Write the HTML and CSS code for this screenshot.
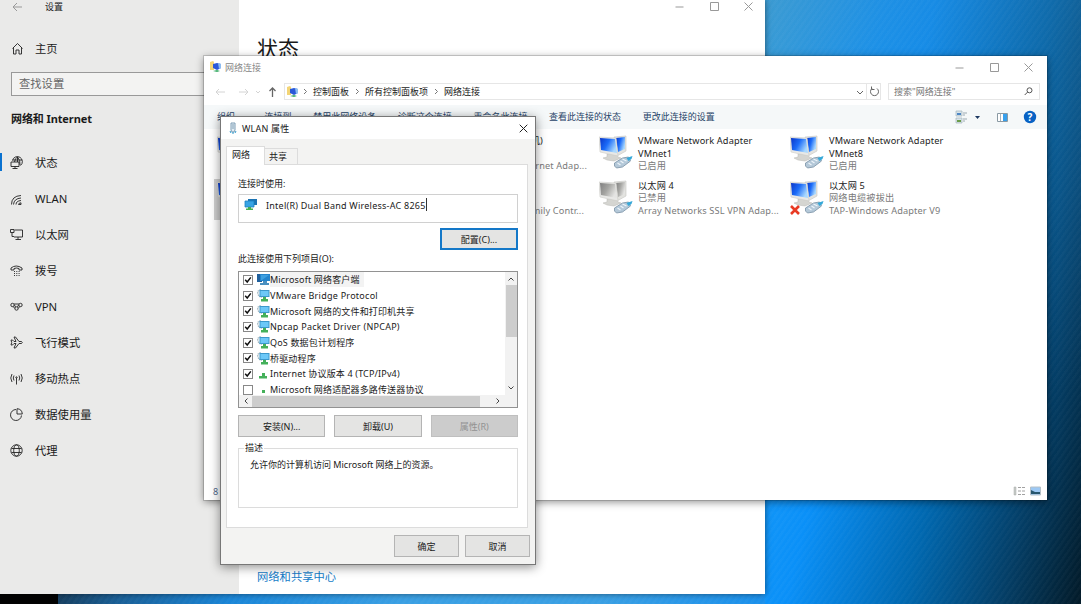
FILE: index.html
```html
<!DOCTYPE html>
<html lang="zh-CN">
<head>
    <meta charset="UTF-8">
    <meta name="viewport" content="width=device-width, initial-scale=1.0">
    <title>网络连接</title>
    <link rel="stylesheet" href="styles.css">
</head>
<body>

    <!-- Shared icons -->
    <svg class="defs" width="0" height="0">
        <defs>
            <linearGradient id="screen" x1="0" y1="0" x2="1" y2="0.5">
                <stop offset="0" stop-color="#0a35c8"/>
                <stop offset="0.5" stop-color="#1c6cf8"/>
                <stop offset="1" stop-color="#a8d8ff"/>
            </linearGradient>
            <linearGradient id="screen-off" x1="0" y1="0" x2="1" y2="0.5">
                <stop offset="0" stop-color="#808080"/>
                <stop offset="0.5" stop-color="#a5a5a2"/>
                <stop offset="1" stop-color="#e4e4e2"/>
            </linearGradient>
            <symbol id="plug" viewBox="0 0 20 14">
                <path d="M1 8l8-5 6-1 2 4-8 6-6 1-2-2z" fill="#b4c8d8" stroke="#7890a4" stroke-width=".8"/>
                <path d="M4 8l3 2M7 6l3 2M9 4l4 2" stroke="#edf5fa" stroke-width="1.2"/>
                <path d="M13 3l6-2-1 3-3 2z" fill="#35a8d8"/>
            </symbol>
            <symbol id="adapter" viewBox="0 0 35 35">
                <path d="M15 2l12-1v15l-9 5z" fill="#e3e3df" stroke="#c6c6c2" stroke-width=".6"/>
                <path d="M17 3l9-1v12l-7 3z" fill="url(#screen)"/>
                <path d="M8 19l10 1 1 2 3 1-7 3-7-1-4-2 4-1z" fill="#d5d5d1" stroke="#b8b8b4" stroke-width=".5"/>
                <path d="M0 2l17 1 2 18-18-4z" fill="#e8e8e6" stroke="#ccccc8" stroke-width=".6"/>
                <path d="M1 3l15 1 2 14-16-3z" fill="url(#screen)"/>
                <use href="#plug" x="14" y="20" width="21" height="14"/>
            </symbol>
            <symbol id="adapter-off" viewBox="0 0 35 35">
                <path d="M15 2l12-1v15l-9 5z" fill="#e3e3df" stroke="#c6c6c2" stroke-width=".6"/>
                <path d="M17 3l9-1v12l-7 3z" fill="url(#screen-off)"/>
                <path d="M8 19l10 1 1 2 3 1-7 3-7-1-4-2 4-1z" fill="#d5d5d1" stroke="#b8b8b4" stroke-width=".5"/>
                <path d="M0 2l17 1 2 18-18-4z" fill="#e8e8e6" stroke="#ccccc8" stroke-width=".6"/>
                <path d="M1 3l15 1 2 14-16-3z" fill="url(#screen-off)"/>
                <use href="#plug" x="14" y="20" width="21" height="14"/>
            </symbol>
            <symbol id="folder" viewBox="0 0 12 12">
                <path d="M0 1l3-1 1 1v8H0z" fill="#f3d576"/>
                <path d="M3 3l4-1 4 1v4l-4 2-4-2z" fill="#2a58d8"/>
                <path d="M8 2l3 1v4l-2 1z" fill="#8cbcf0"/>
                <path d="M3 10l4-1 3 1-3 1z" fill="#3fae6a"/>
            </symbol>
            <symbol id="client" viewBox="0 0 13 13">
                <path d="M0 1h3v3h2v5H0z" fill="#1f5f9c"/>
                <path d="M3 1h10v7H3z" fill="#2484cc"/>
                <path d="M4 2h8L5 7H4z" fill="#3ea0e0"/>
                <path d="M6 8h4v2h2v2H3v-2h3z" fill="#4a90c0"/>
            </symbol>
            <symbol id="service" viewBox="0 0 13 13">
                <path d="M4 1Q0 1 1 5q1 3 4 3" fill="none" stroke="#9db4c0" stroke-width="1.4" stroke-dasharray="1.5 .6"/>
                <path d="M2.500 1h10v7h-10z" fill="#3c98cc"/>
                <path d="M3.500 2h8v5h-8z" fill="#6cc8f8"/>
                <path d="M6 8h3v2h2v2.500H4V10h2z" fill="#44b05a"/>
            </symbol>
            <symbol id="protocol" viewBox="0 0 13 13">
                <path d="M5 6h3v3h2v2.500H2V9h3z" fill="#44b05a"/>
            </symbol>
            <symbol id="check" viewBox="0 0 8 8">
                <path d="M1.200 3.800l2 2.200 3.600-4.600" fill="none" stroke="#111" stroke-width="1.500"/>
            </symbol>
        </defs>
    </svg>

    <div class="desktop">
        <div class="stripes"></div>
        <div class="taskbar"></div>

        <!-- Settings -->
        <div class="window settings">
            <div class="sidebar">
                <div class="settings-title">
                    <svg class="back" viewBox="0 0 10 10"><path d="M10 5H1M5 1L1 5l4 4"/></svg>
                    <span>设置</span>
                </div>
                <div class="nav-item home">
                    <svg viewBox="0 0 13 13"><path d="M1.500 6.500l5-5 5 5M2.500 5.500V12H5V8h3v4h2.500V5.500"/></svg>
                    <span>主页</span>
                </div>
                <div class="find-box">查找设置</div>
                <div class="nav-heading">网络和 Internet</div>
                <div class="nav-item active">
                    <svg viewBox="0 0 13 13"><path d="M2.500 4.500A5 5 0 1 1 10.500 9.500M2.500 4h9.500M7.500 1v5M7.500 1Q5 2 4.500 6M7.500 1q3 3 2.500 8M1 6h8v4.500H1zM5 10.500v2M2.500 12.500h5"/></svg>
                    <span>状态</span>
                </div>
                <div class="nav-item">
                    <svg viewBox="0 0 13 13"><path d="M1.500 12.500Q1.500 4 11 3.500M3.500 12.500Q4 6.500 11 6M6 12.500q0-3.500 5-4M8.500 12.500q0-1.500 2.500-1.700v1.700z"/></svg>
                    <span>WLAN</span>
                </div>
                <div class="nav-item">
                    <svg viewBox="0 0 13 13"><path d="M4.500 2h8v7H4M8 9v2.500M5.500 11.500H11M.5 1.500h3.500v3H.5zM2 4.500v4h2"/></svg>
                    <span>以太网</span>
                </div>
                <div class="nav-item">
                    <svg viewBox="0 0 13 13"><path d="M1 6V4q5-4 11 0v2H9V4.500Q6.500 3.500 4 4.500V6z"/><path d="M4 7.500h6M4 9.500h6M4 11.500h6" stroke-dasharray="1 1.300"/></svg>
                    <span>拨号</span>
                </div>
                <div class="nav-item">
                    <svg viewBox="0 0 13 13"><circle cx="2.500" cy="5" r="1.700"/><circle cx="10.500" cy="5" r="1.700"/><circle cx="6.500" cy="8.500" r="1.700"/><path d="M4 5.500l2 1M9 5.500l-2 1M4 4h5M3 6.500l2 2M10 6.500l-2 2"/></svg>
                    <span>VPN</span>
                </div>
                <div class="nav-item">
                    <svg viewBox="0 0 13 13"><path d="M1 4h1.500L4 5.500h2L4 1h1.500L9 5.500h2.500q1.500 1 0 2H9L5.500 12H4l2-4.500H4L2.500 9H1l.7-2.500z"/></svg>
                    <span>飞行模式</span>
                </div>
                <div class="nav-item">
                    <svg viewBox="0 0 13 13"><path d="M2 2q-2.500 4 0 8M11 2q2.500 4 0 8M4 3.500Q2.500 6 4 8.500M9 3.500q1.500 2.500 0 5M6.500 6v6.500"/><circle cx="6.500" cy="5.500" r=".7"/></svg>
                    <span>移动热点</span>
                </div>
                <div class="nav-item">
                    <svg viewBox="0 0 13 13"><path d="M6 1.500a5.500 5.500 0 1 0 5.500 6M7 .7V6h5.300Q12 1 7 .7z"/></svg>
                    <span>数据使用量</span>
                </div>
                <div class="nav-item">
                    <svg viewBox="0 0 13 13"><circle cx="6.500" cy="6.500" r="5.700"/><ellipse cx="6.500" cy="6.500" rx="2.800" ry="5.700"/><path d="M1.500 4.500h10M1.500 8.500h10"/></svg>
                    <span>代理</span>
                </div>
            </div>
            <div class="settings-main">
                <div class="controls">
                    <svg viewBox="0 0 9 9"><path d="M.5 5h8"/></svg>
                    <svg viewBox="0 0 9 9"><path d="M.5.5h8v8h-8z"/></svg>
                    <svg viewBox="0 0 9 9"><path d="M.5.5l8 8M8.500.5l-8 8"/></svg>
                </div>
                <h1>状态</h1>
                <a class="sharing-link">网络和共享中心</a>
            </div>
        </div>

        <!-- Network connections -->
        <div class="window explorer">
            <div class="explorer-title">
                <svg class="folder-icon"><use href="#folder"/></svg>
                <span>网络连接</span>
                <div class="controls">
                    <svg viewBox="0 0 9 9"><path d="M.5 5h8"/></svg>
                    <svg viewBox="0 0 9 9"><path d="M.5.5h8v8h-8z"/></svg>
                    <svg viewBox="0 0 9 9"><path d="M.5.5l8 8M8.500.5l-8 8"/></svg>
                </div>
            </div>
            <div class="address-row">
                <svg class="nav-arrows" viewBox="0 0 66 12">
                    <path class="dim" d="M10 6H1M4 3L1 6l3 3M24 6h9M30 3l3 3-3 3M41 5l2 2 2-2"/>
                    <path class="up" d="M57.500 11V2M54.500 5l3-3 3 3"/>
                </svg>
                <div class="address">
                    <svg class="folder-icon"><use href="#folder"/></svg>
                    <svg class="chevron" viewBox="0 0 5 7"><path d="M1 1l2.500 2.500L1 6"/></svg>
                    <span>控制面板</span>
                    <svg class="chevron" viewBox="0 0 5 7"><path d="M1 1l2.500 2.500L1 6"/></svg>
                    <span>所有控制面板项</span>
                    <svg class="chevron" viewBox="0 0 5 7"><path d="M1 1l2.500 2.500L1 6"/></svg>
                    <span>网络连接</span>
                    <svg class="address-end" viewBox="0 0 26 16"><path d="M3 7l3 3 3-3"/><path class="divider" d="M12.500 0v16"/><path d="M18 4.500a4 4 0 1 0 5 0M17.500 2.500v3h3"/></svg>
                </div>
                <div class="search">
                    <span>搜索"网络连接"</span>
                    <svg viewBox="0 0 9 9"><circle cx="5.500" cy="3.300" r="2.500"/><path d="M3.700 5L.7 8"/></svg>
                </div>
            </div>
            <div class="commands">
                <span class="organize">组织 <i></i></span>
                <span>连接到</span>
                <span>禁用此网络设备</span>
                <span>诊断这个连接</span>
                <span>重命名此连接</span>
                <span>查看此连接的状态</span>
                <span>更改此连接的设置</span>
                <svg class="view-icons" viewBox="0 0 82 14">
                    <path d="M1 1h6v5H1zM1 8h6v5H1z" fill="#d8e4ea" stroke="#a5b4bc" stroke-width=".7"/>
                    <path d="M2 3h4v2H2z" fill="#4e86c4"/><path d="M2 10h4v2H2z" fill="#6a9c48"/>
                    <path d="M8 3h4M8 5h2M8 9h4M8 11h2" stroke="#9caab2"/>
                    <path d="M20 6h5l-2.500 3z" fill="#1c3860"/>
                    <path d="M42.500 3.500h10v8h-10z" fill="#fff" stroke="#8a9aa4"/>
                    <path d="M48 4h4v7h-4z" fill="#38a0ec"/><path d="M45.500 4v7" stroke="#a6b2ba"/>
                    <circle cx="75" cy="7" r="6.200" fill="#0862c4"/>
                    <text x="75" y="10.600" text-anchor="middle">?</text>
                </svg>
            </div>
            <div class="connections">
                <div class="connection first">
                    <svg class="adapter"><use href="#adapter"/></svg>
                </div>
                <div class="connection clipped">
                    <div class="lines">
                        <div class="name machine">以太网 (虚拟机)</div>
                        <div>&nbsp;</div>
                        <div>Virtual Ethernet Adap...</div>
                    </div>
                </div>
                <div class="connection">
                    <svg class="adapter"><use href="#adapter"/></svg>
                    <div class="lines">
                        <div class="name">VMware Network Adapter</div>
                        <div class="name">VMnet1</div>
                        <div>已启用</div>
                    </div>
                </div>
                <div class="connection">
                    <svg class="adapter"><use href="#adapter"/></svg>
                    <div class="lines">
                        <div class="name">VMware Network Adapter</div>
                        <div class="name">VMnet8</div>
                        <div>已启用</div>
                    </div>
                </div>
                <div class="connection first selected">
                    <svg class="adapter"><use href="#adapter"/></svg>
                </div>
                <div class="connection clipped second">
                    <div class="lines">
                        <div>&nbsp;</div>
                        <div>&nbsp;</div>
                        <div>GbE Family Contr...</div>
                    </div>
                </div>
                <div class="connection">
                    <svg class="adapter"><use href="#adapter-off"/></svg>
                    <div class="lines">
                        <div class="name">以太网 4</div>
                        <div>已禁用</div>
                        <div>Array Networks SSL VPN Adap...</div>
                    </div>
                </div>
                <div class="connection">
                    <svg class="adapter"><use href="#adapter"/><path d="M1 26l8 8M9 26l-8 8" stroke="#e83a24" stroke-width="2.600"/></svg>
                    <div class="lines">
                        <div class="name">以太网 5</div>
                        <div>网络电缆被拔出</div>
                        <div>TAP-Windows Adapter V9</div>
                    </div>
                </div>
            </div>
            <div class="status-bar">
                <span>8</span>
                <svg viewBox="0 0 28 10">
                    <path d="M1 1h2v8H1z" fill="#c6ccc8" stroke="#aaa" stroke-width=".5"/>
                    <path d="M5 1.500h3M9 1.500h3M5 5h3M9 5h3M5 8.500h3M9 8.500h3" stroke="#8a8a8a" stroke-width=".8"/>
                    <path d="M17.500 1h10v8h-10z" fill="#9cc8f4" stroke="#b4c0c8"/>
                    <path d="M18 4l4 2h5v2h-9z" fill="#28566e"/>
                </svg>
            </div>
        </div>

        <!-- WLAN properties -->
        <div class="window dialog">
            <div class="dialog-title">
                <svg class="adapter-small" viewBox="0 0 8 12"><path d="M2 1h4v7L5 10H3L2 8z" fill="#e4eef4" stroke="#7c9cb4"/><path d="M4 2v5" stroke="#7c9cb4"/><path d="M1 9l1 2M4 10v2M7 9l-1 2" stroke="#2c98cc"/></svg>
                <span>WLAN 属性</span>
                <svg class="close" viewBox="0 0 9 9"><path d="M.7.7l7.600 7.600M8.300.7L.7 8.300"/></svg>
            </div>
            <div class="tabs">
                <div class="tab current">网络</div>
                <div class="tab">共享</div>
            </div>
            <div class="panel">
                <div class="label">连接时使用:</div>
                <div class="device-box">
                    <svg viewBox="0 0 13 13"><path d="M4 1h9v6H4z" fill="#1c74b4"/><path d="M1 3h9v6H1z" fill="#38a4e4" stroke="#1c80c0" stroke-width=".8"/><path d="M4 9h3v1.500h2V12H2v-1.500h2z" fill="#44b050"/></svg>
                    <span>Intel(R) Dual Band Wireless-AC 8265</span>
                </div>
                <button class="configure">配置(C)...</button>
                <div class="label">此连接使用下列项目(O):</div>
                <div class="list-box">
                    <div class="list-body">
                        <ul>
                            <li class="marked"><b><svg><use href="#check"/></svg></b><svg class="kind"><use href="#client"/></svg><span>Microsoft 网络客户端</span></li>
                            <li><b><svg><use href="#check"/></svg></b><svg class="kind"><use href="#service"/></svg><span class="latin">VMware Bridge Protocol</span></li>
                            <li><b><svg><use href="#check"/></svg></b><svg class="kind"><use href="#service"/></svg><span>Microsoft 网络的文件和打印机共享</span></li>
                            <li><b><svg><use href="#check"/></svg></b><svg class="kind"><use href="#service"/></svg><span class="latin">Npcap Packet Driver (NPCAP)</span></li>
                            <li><b><svg><use href="#check"/></svg></b><svg class="kind"><use href="#service"/></svg><span>QoS 数据包计划程序</span></li>
                            <li><b><svg><use href="#check"/></svg></b><svg class="kind"><use href="#service"/></svg><span>桥驱动程序</span></li>
                            <li><b><svg><use href="#check"/></svg></b><svg class="kind"><use href="#protocol"/></svg><span>Internet 协议版本 4 (TCP/IPv4)</span></li>
                            <li><b></b><svg class="kind" viewBox="0 0 13 13"><path d="M5 7h3v3H5z" fill="#44b05a"/></svg><span>Microsoft 网络适配器多路传送器协议</span></li>
                        </ul>
                        <div class="scroll-y">
                            <svg viewBox="0 0 6 4"><path d="M.5 3.500L3 1l2.500 2.500"/></svg>
                            <div class="thumb"></div>
                            <svg viewBox="0 0 6 4"><path d="M.5.5L3 3 5.500.5"/></svg>
                        </div>
                    </div>
                    <div class="scroll-x">
                        <svg viewBox="0 0 4 6"><path d="M3.500.5L1 3l2.500 2.500"/></svg>
                        <div class="thumb"></div>
                        <svg viewBox="0 0 4 6"><path d="M.5.5L3 3 .5 5.500"/></svg>
                    </div>
                </div>
                <div class="actions">
                    <button>安装(N)...</button>
                    <button>卸载(U)</button>
                    <button class="disabled">属性(R)</button>
                </div>
                <fieldset>
                    <legend>描述</legend>
                    允许你的计算机访问 Microsoft 网络上的资源。
                </fieldset>
            </div>
            <div class="dialog-buttons">
                <button>确定</button>
                <button>取消</button>
            </div>
        </div>
    </div>

</body>
</html>
```
FILE: styles.css
```css
* {
    box-sizing: border-box;
}

body {
    margin: 0;
    font-family: "Noto Sans", "Noto Sans CJK SC", sans-serif;
    font-size: 9px;
    color: #1a1a1a;
    white-space: nowrap;
}

svg {
    display: block;
    flex: none;
    fill: none;
}

.defs {
    position: absolute;
}

.desktop {
    position: relative;
    width: 1081px;
    height: 604px;
    overflow: hidden;
    background:
        linear-gradient(90deg, #163f60 58px, #1a6098 120px, #1a86d8 230px, #3aa0e4 400px, #3aa0e4 600px, #1a90ec 765px) 0 594px / 765px 10px no-repeat,
        linear-gradient(180deg, rgba(80, 120, 150, 0.2), rgba(80, 120, 150, 0) 65%),
        linear-gradient(104deg, #38a4e0 62%, #1296f8 72%, #0a90f8 76%, #0068b0 85.5%, #043e66 93.5%, #021a28 100%);
}

.stripes {
    position: absolute;
    inset: 0;
    background: repeating-linear-gradient(125deg, rgba(255, 255, 255, 0.025) 0 2px, rgba(255, 255, 255, 0) 3px 5px);
}

.taskbar {
    position: absolute;
    left: 0;
    bottom: 0;
    width: 58px;
    height: 10px;
    background: #030303;
}

.window {
    position: absolute;
    background: #fff;
}

.controls {
    display: flex;
    gap: 25.5px;
    margin-left: auto;
}

.controls svg {
    width: 9px;
    height: 9px;
    stroke: #999;
}

/* Settings */
.settings {
    left: 0;
    top: 0;
    width: 765px;
    height: 594px;
    display: flex;
    box-shadow: 0 0 6px rgba(0, 0, 0, 0.5);
}

.sidebar {
    width: 239px;
    background: #eaeae9;
    font-size: 11.3px;
}

.settings-title {
    display: flex;
    align-items: center;
    height: 13px;
    padding-left: 12px;
    font-size: 9px;
    gap: 23px;
}

.back {
    width: 10px;
    height: 10px;
    stroke: #999;
}

.nav-item {
    display: flex;
    align-items: center;
    height: 36px;
    padding-left: 10px;
    gap: 12px;
}

.nav-item svg {
    width: 13px;
    height: 13px;
    stroke: #222;
    stroke-width: 0.9;
}

.home {
    margin-top: 17px;
    padding-left: 11px;
    gap: 11px;
}

.find-box {
    height: 24px;
    margin: 6px 0 0 11px;
    padding-left: 7px;
    border: 1.5px solid #999;
    background: #f3f3f2;
    color: #666;
    line-height: 22px;
}

.nav-heading {
    height: 48px;
    padding: 14px 0 0 11px;
    font-weight: bold;
    font-size: 11px;
    letter-spacing: -0.1px;
    line-height: 17px;
}

.active {
    background: linear-gradient(#0a72d0, #0a72d0) 0 50% / 2px 18px no-repeat;
}

.settings-main {
    flex: 1;
    display: flex;
    flex-direction: column;
    padding: 2px 12px 0 18px;
}

h1 {
    margin: 21px 0 0;
    font-size: 21px;
    font-weight: normal;
    line-height: 32px;
}

.sharing-link {
    margin-top: auto;
    padding-bottom: 8px;
    color: #147cc8;
    font-size: 11.3px;
    line-height: 18px;
}

/* Network connections */
.explorer {
    left: 204px;
    top: 56px;
    width: 843px;
    height: 444px;
    display: flex;
    flex-direction: column;
    box-shadow: 0 0 0 1px rgba(0, 0, 0, 0.15), 0 2px 8px rgba(0, 0, 0, 0.45);
}

.explorer-title {
    display: flex;
    align-items: center;
    height: 22px;
    padding: 0 14px 0 6px;
    color: #888;
}

.folder-icon {
    width: 12px;
    height: 12px;
    margin-right: 3px;
}

.address-row {
    display: flex;
    height: 17px;
    margin-top: 5px;
    padding: 0 7px 0 9px;
}

.nav-arrows {
    width: 70px;
    height: 12px;
    margin-top: 3px;
}

.dim {
    stroke: #d4d4d4;
}

.up {
    stroke: #666;
    stroke-width: 1.3;
}

.address,
.search {
    display: flex;
    align-items: center;
    border: 1px solid #e6e6e6;
}

.address {
    width: 597px;
    margin-left: 1px;
    padding-left: 2px;
}

.chevron {
    width: 5px;
    height: 7px;
    margin-right: 5px;
    stroke: #777;
}

.address span + .chevron {
    margin-left: 6px;
}

.address .folder-icon {
    margin-right: 4px;
}

.address-end {
    width: 26px;
    height: 16px;
    margin-left: auto;
    stroke: #666;
}

.address-end .divider {
    stroke: #e6e6e6;
}

.search {
    flex: 1;
    justify-content: space-between;
    margin-left: 7px;
    padding: 0 6px 0 5px;
    color: #777;
}

.search svg {
    width: 9px;
    height: 9px;
    stroke: #555;
}

.commands {
    display: flex;
    align-items: center;
    gap: 21.6px;
    height: 24px;
    margin-top: 5px;
    padding: 0 10px 1px 13px;
    background: #f5f8f9;
    color: #274468;
}

.organize {
    width: 26px;
}

.organize i {
    display: inline-block;
    border: 2.5px solid transparent;
    border-top-color: #274468;
    border-bottom: 0;
    vertical-align: 2px;
}

.view-icons {
    width: 82px;
    height: 14px;
    margin-left: auto;
}

.view-icons text {
    fill: #fff;
    font-size: 10px;
    font-weight: bold;
}

.connections {
    display: grid;
    grid-template-columns: 191px 191px 191px 191px;
    grid-auto-rows: 44.5px;
    padding: 5px 0 0 13px;
}

.connection {
    display: flex;
    gap: 4px;
}

.adapter {
    width: 35px;
    height: 35px;
    margin-top: 1px;
}

.first {
    margin: 0 3px 3px -3px;
    padding-left: 3px;
}

.selected {
    background: #d0d0d0;
}

.clipped {
    justify-content: flex-end;
    padding-right: 12px;
    text-align: right;
}

.machine {
    padding-right: 44px;
}

.second {
    padding-right: 15px;
}

.lines {
    padding-top: 1px;
    color: #7a7a7a;
    font-size: 9.2px;
    letter-spacing: 0.14px;
    line-height: 12.6px;
}

.name {
    color: #222;
}

.status-bar {
    display: flex;
    align-items: center;
    justify-content: space-between;
    height: 18px;
    margin-top: auto;
    padding: 0 6px 0 9px;
    color: #50688c;
}

.status-bar svg {
    width: 28px;
    height: 10px;
}

/* Properties dialog */
.dialog {
    left: 220px;
    top: 116px;
    width: 316px;
    height: 449px;
    border: 1px solid #777;
    background: #f3f3f2;
    box-shadow: 0 2px 10px rgba(0, 0, 0, 0.45);
}

.dialog-title {
    display: flex;
    align-items: center;
    height: 22px;
    padding: 0 7px 0 8px;
    gap: 5px;
    background: #fff;
    letter-spacing: 0.2px;
}

.adapter-small {
    width: 8px;
    height: 12px;
}

.close {
    width: 9px;
    height: 9px;
    margin-left: auto;
    stroke: #222;
}

.tabs {
    display: flex;
    align-items: flex-end;
    height: 25px;
    padding-left: 5px;
}

.tab {
    width: 33px;
    height: 16px;
    border: 1px solid #dcdcdc;
    border-left: 0;
    border-bottom: 0;
    padding-left: 4px;
    line-height: 15px;
}

.current {
    width: 39px;
    height: 19px;
    margin-bottom: -1px;
    padding-left: 5px;
    border-left: 1px solid #dcdcdc;
    background: #fff;
    line-height: 16px;
    z-index: 1;
}

.panel {
    height: 364px;
    margin: 0 7px 0 5px;
    padding: 12px 9px 0 11px;
    border: 1px solid #dcdcdc;
    background: #fff;
}

.label {
    line-height: 14px;
}

.device-box {
    display: flex;
    height: 29px;
    margin-top: 3px;
    padding: 3px 5px;
    border: 1px solid #d0d0d0;
    gap: 9px;
}

.device-box svg {
    width: 13px;
    height: 13px;
}

.device-box span {
    height: 13px;
    border-right: 1px solid #333;
    letter-spacing: 0.24px;
    line-height: 15px;
}

button {
    height: 22px;
    padding: 0;
    border: 1px solid #b4b4b4;
    background: #e4e4e3;
    color: #1a1a1a;
    font: inherit;
}

.configure {
    display: block;
    width: 78px;
    margin: 5px 0 2px auto;
    border: 2px solid #1478c8;
}

.list-box {
    height: 137px;
    margin-top: 5px;
    border: 1px solid #929292;
}

.list-body {
    display: flex;
    height: 123px;
    overflow: hidden;
}

ul {
    flex: 1;
    margin: 0;
    padding: 0 0 0 5px;
    list-style: none;
    letter-spacing: 0.16px;
}

.latin {
    letter-spacing: 0.26px;
}

li {
    display: flex;
    align-items: center;
    height: 15.7px;
    line-height: 13px;
}

li b {
    width: 8px;
    height: 8px;
    margin-right: 5px;
    outline: 1px solid #888;
    outline-offset: -0.5px;
}

li b svg {
    width: 8px;
    height: 8px;
}

.kind {
    width: 13px;
    height: 13px;
}

.marked span {
    padding-right: 4px;
    background: #f3f3f3;
    line-height: 15px;
}

.scroll-y {
    display: flex;
    flex-direction: column;
    align-items: center;
    width: 12px;
    padding: 5px 0;
    background: #f2f2f2;
}

.scroll-y svg {
    width: 6px;
    height: 4px;
    stroke: #444;
}

.scroll-y .thumb {
    width: 11px;
    height: 52px;
    margin: 4px 0 auto;
    background: #cdcdcd;
}

.scroll-x {
    display: flex;
    align-items: center;
    height: 12px;
    padding: 0 17px 0 5px;
    background: #f2f2f2;
}

.scroll-x svg {
    width: 4px;
    height: 6px;
    stroke: #444;
}

.scroll-x .thumb {
    width: 228px;
    height: 11px;
    margin: 0 auto 0 4px;
    background: #cdcdcd;
}

.actions {
    display: flex;
    gap: 9px;
    margin-top: 7px;
}

.actions button {
    flex: 1;
}

.actions .disabled {
    border-color: #bfbfbf;
    background: #ccc;
    color: #929292;
}

fieldset {
    height: 66px;
    margin: 5px 0 0;
    padding: 4px 11px;
    border: 1px solid #dcdcdc;
    line-height: 14px;
}

legend {
    margin-left: -6px;
    padding: 0 1px;
    line-height: 12px;
}

.dialog-buttons {
    display: flex;
    justify-content: flex-end;
    gap: 6px;
    padding: 7px 5px 0 0;
}

.dialog-buttons button {
    width: 65px;
}
```
